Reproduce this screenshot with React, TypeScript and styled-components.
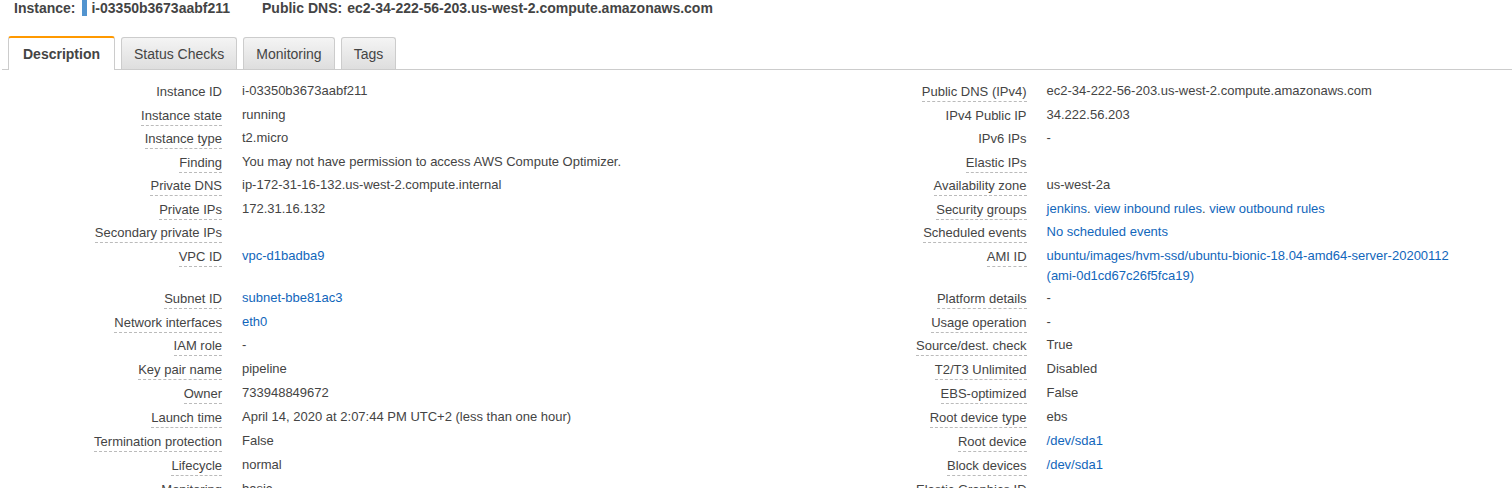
import React, { useState } from "react";
import styled, { createGlobalStyle } from "styled-components";

const GlobalStyle = createGlobalStyle`
  * { box-sizing: border-box; }
  html, body, #root { height: 100%; }
  body {
    margin: 0;
    overflow: hidden;
    background: #fff;
    color: #444;
    font-family: "Liberation Sans", Arial, sans-serif;
    font-size: 13px;
    line-height: 20px;
  }
`;

const Panel = styled.section`
  height: 100%;
  overflow: hidden;
`;

const Summary = styled.header`
  display: flex;
  gap: 32px;
  padding-left: 14px;
  font-size: 14px;
  font-weight: bold;
  line-height: 16px;
  white-space: nowrap;
`;

const SummaryItem = styled.div`
  display: flex;
  gap: 5px;
`;

const InstanceName = styled.span`
  display: flex;
  gap: 4px;
`;

const StatusBar = styled.span`
  width: 5px;
  height: 16px;
  margin-left: 2px;
  background: #5294cf;
`;

const TabBar = styled.div`
  display: flex;
  align-items: flex-end;
  gap: 6px;
  margin: 20px 0 0 2px;
  padding-left: 6px;
  border-bottom: 1px solid #ccc;
`;

const Tab = styled.button<{ $active: boolean }>`
  height: ${(p) => (p.$active ? 34 : 32)}px;
  margin-bottom: ${(p) => (p.$active ? -1 : 0)}px;
  padding: 0 ${(p) => (p.$active ? 14 : 12)}px;
  border: 1px solid #ccc;
  border-bottom: 0;
  border-top: ${(p) => (p.$active ? "2px solid #f90" : "1px solid #ccc")};
  border-radius: 3px 3px 0 0;
  background: ${(p) => (p.$active ? "#fff" : "linear-gradient(#f4f4f4, #dedede)")};
  color: #444;
  font-family: inherit;
  font-size: 14px;
  font-weight: ${(p) => (p.$active ? "bold" : "normal")};
  line-height: 20px;
  white-space: nowrap;
  cursor: pointer;
`;

const Details = styled.table`
  width: 100%;
  margin-top: 9px;
  border-collapse: collapse;
  table-layout: fixed;
`;

const LabelColumn = styled.col<{ $width: number }>`
  width: ${(p) => p.$width}px;
`;

const ValueColumn = styled.col`
  width: 38%;
`;

const Row = styled.tr`
  height: 24px;
  &:nth-child(-2n + 10) {
    height: 23px;
  }
`;

const LabelCell = styled.th`
  padding: 3px 10px 0 0;
  font-weight: normal;
  line-height: 19px;
  text-align: right;
  vertical-align: top;
  white-space: nowrap;
`;

const Label = styled.span<{ $hint: boolean }>`
  display: inline-block;
  height: 20px;
  vertical-align: top;
  border-bottom: ${(p) => (p.$hint ? "1px dashed #bbb" : "0")};
`;

const ValueCell = styled.td`
  padding: 2px 10px 0 10px;
  vertical-align: top;
`;

const Link = styled.a`
  color: #1166bb;
  text-decoration: none;
  &:hover {
    text-decoration: underline;
  }
`;

const Unbroken = styled.span`
  white-space: nowrap;
`;

type Field = { label: string; hint?: boolean; value?: React.ReactNode };

const link = (content: React.ReactNode) => <Link href="#">{content}</Link>;

const rows: [Field, Field][] = [
  [
    { label: "Instance ID", hint: false, value: "i-03350b3673aabf211" },
    { label: "Public DNS (IPv4)", value: "ec2-34-222-56-203.us-west-2.compute.amazonaws.com" },
  ],
  [
    { label: "Instance state", value: "running" },
    { label: "IPv4 Public IP", hint: false, value: "34.222.56.203" },
  ],
  [
    { label: "Instance type", value: "t2.micro" },
    { label: "IPv6 IPs", hint: false, value: "-" },
  ],
  [
    { label: "Finding", value: "You may not have permission to access AWS Compute Optimizer." },
    { label: "Elastic IPs" },
  ],
  [
    { label: "Private DNS", value: "ip-172-31-16-132.us-west-2.compute.internal" },
    { label: "Availability zone", value: "us-west-2a" },
  ],
  [
    { label: "Private IPs", value: "172.31.16.132" },
    {
      label: "Security groups",
      value: (
        <>
          {link("jenkins")}. {link("view inbound rules")}. {link("view outbound rules")}
        </>
      ),
    },
  ],
  [{ label: "Secondary private IPs" }, { label: "Scheduled events", value: link("No scheduled events") }],
  [
    { label: "VPC ID", value: link("vpc-d1badba9") },
    {
      label: "AMI ID",
      value: link(
        <>
          ubuntu/images/hvm-ssd/ubuntu-bionic-18.04-amd64-server-20200112{" "}
          <Unbroken>(ami-0d1cd67c26f5fca19)</Unbroken>
        </>
      ),
    },
  ],
  [
    { label: "Subnet ID", value: link("subnet-bbe81ac3") },
    { label: "Platform details", value: "-" },
  ],
  [
    { label: "Network interfaces", value: link("eth0") },
    { label: "Usage operation", value: "-" },
  ],
  [
    { label: "IAM role", value: "-" },
    { label: "Source/dest. check", value: "True" },
  ],
  [
    { label: "Key pair name", value: "pipeline" },
    { label: "T2/T3 Unlimited", value: "Disabled" },
  ],
  [
    { label: "Owner", value: "733948849672" },
    { label: "EBS-optimized", value: "False" },
  ],
  [
    { label: "Launch time", value: "April 14, 2020 at 2:07:44 PM UTC+2 (less than one hour)" },
    { label: "Root device type", value: "ebs" },
  ],
  [
    { label: "Termination protection", value: "False" },
    { label: "Root device", value: link("/dev/sda1") },
  ],
  [
    { label: "Lifecycle", value: "normal" },
    { label: "Block devices", value: link("/dev/sda1") },
  ],
  [{ label: "Monitoring", value: "basic" }, { label: "Elastic Graphics ID" }],
];

const tabs = ["Description", "Status Checks", "Monitoring", "Tags"];

export default function App() {
  const [active, setActive] = useState(tabs[0]);
  return (
    <Panel>
      <GlobalStyle />
      <Summary>
        <SummaryItem>
          <span>Instance:</span>
          <InstanceName>
            <StatusBar />
            i-03350b3673aabf211
          </InstanceName>
        </SummaryItem>
        <SummaryItem>
          <span>Public DNS:</span>
          <span>ec2-34-222-56-203.us-west-2.compute.amazonaws.com</span>
        </SummaryItem>
      </Summary>
      <TabBar role="tablist">
        {tabs.map((tab) => (
          <Tab
            key={tab}
            type="button"
            role="tab"
            aria-selected={tab === active}
            $active={tab === active}
            onClick={() => setActive(tab)}
          >
            {tab}
          </Tab>
        ))}
      </TabBar>
      <Details>
        <colgroup>
          <LabelColumn $width={232} />
          <ValueColumn />
          <LabelColumn $width={230} />
          <col />
        </colgroup>
        <tbody>
          {rows.map((pair) => (
            <Row key={pair[0].label}>
              {pair.map(({ label, hint = true, value }) => (
                <React.Fragment key={label}>
                  <LabelCell scope="row">
                    <Label $hint={hint}>{label}</Label>
                  </LabelCell>
                  <ValueCell>{value}</ValueCell>
                </React.Fragment>
              ))}
            </Row>
          ))}
        </tbody>
      </Details>
    </Panel>
  );
}
